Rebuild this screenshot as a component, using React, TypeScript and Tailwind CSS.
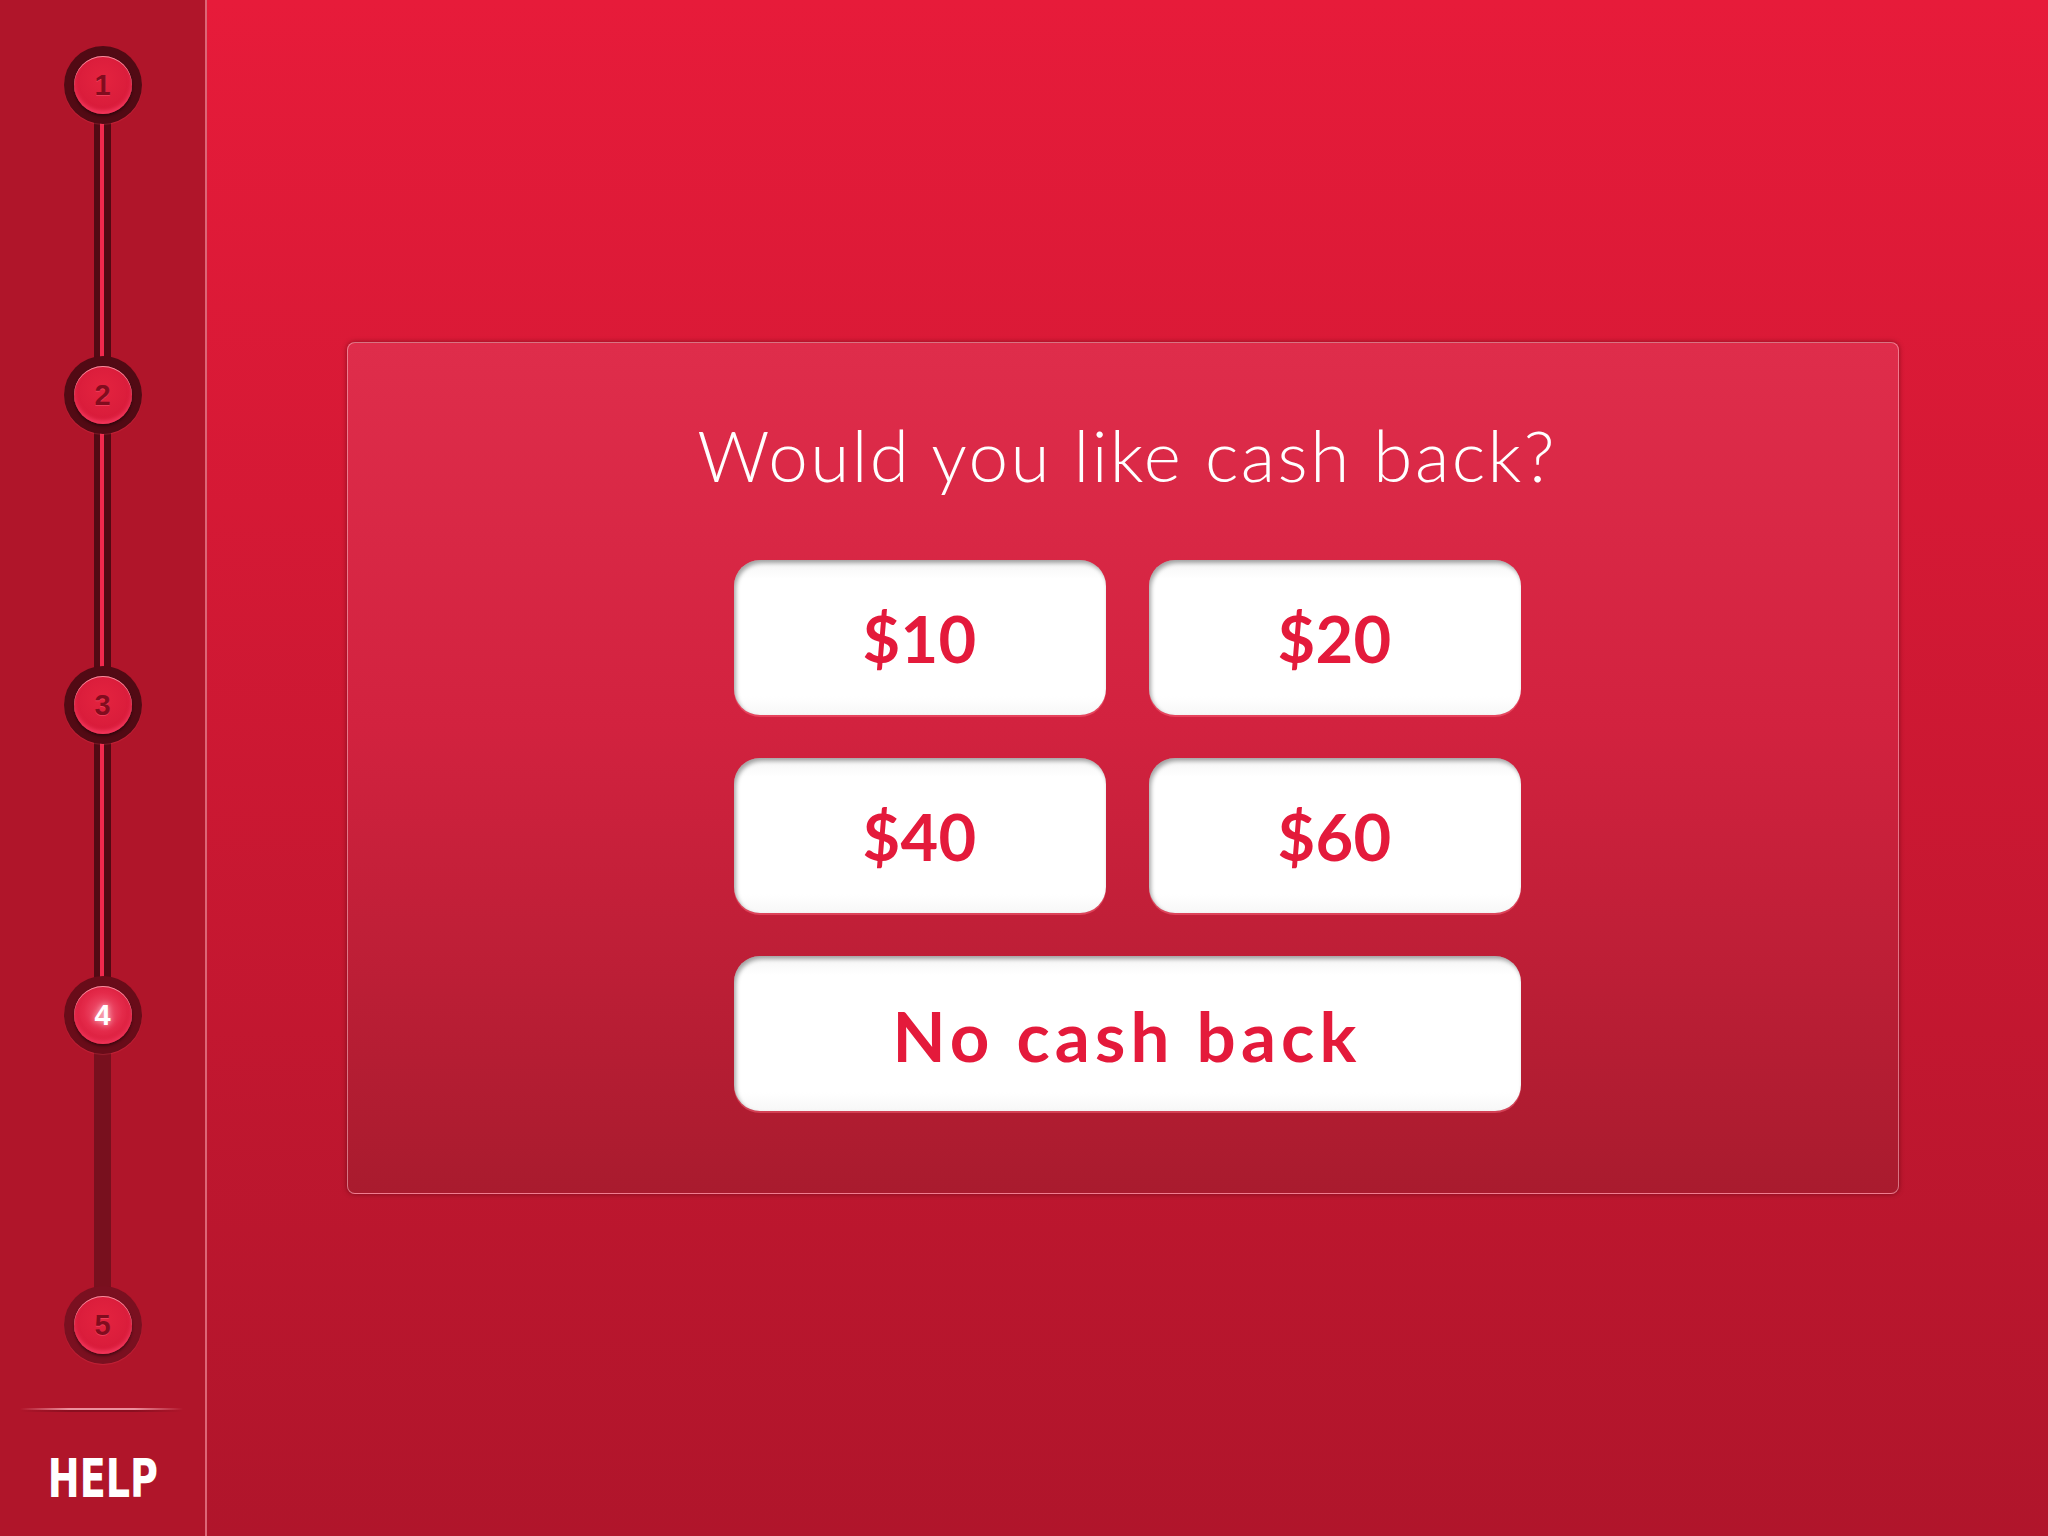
import React from 'react';

type StepProps = {
    num: number;
    state: 'done' | 'current' | 'todo';
};

const Step = ({ num, state }: StepProps) => {
    const ringClass = state === 'done'
        ? "bg-[#520a14]"
        : state === 'current' ? "bg-[#690c19]" : "bg-[#7a1020]";
    const numClass = state === 'current'
        ? "text-white [text-shadow:0_0_6px_rgba(255,255,255,0.7)]"
        : "text-[#820c1e] [text-shadow:0_1px_0_rgba(255,90,120,0.5)]";
    const innerBg = state === 'current'
        ? "bg-[radial-gradient(circle_at_50%_45%,#f25a76_0%,#e42a4a_45%,#d81b3b_75%,#f5325a_100%)]"
        : "bg-[radial-gradient(circle_at_50%_40%,#e4233f_0%,#d91c3b_65%,#f22e55_100%)]";

    return <div className={`relative z-10 w-[78px] h-[78px] rounded-full ${ringClass} flex items-center justify-center shadow-[0_1px_1px_rgba(255,80,100,0.25)]`}>
        <div className={`w-[58px] h-[58px] rounded-full ${innerBg} flex items-center justify-center shadow-[inset_0_1px_0_rgba(255,190,200,0.7),inset_0_-3px_4px_rgba(255,70,110,0.6),0_2px_3px_rgba(0,0,0,0.45)]`}>
            <span className={`font-['Liberation_Sans',sans-serif] font-bold text-[29px] leading-none ${numClass}`}>{num}</span>
        </div>
    </div>
};

const Line = ({ done }: { done: boolean }) => {
    if (!done) {
        return <div className="w-[17px] h-[240px] -my-[4px] bg-[#78101e]" />
    }
    return <div className="w-[17px] h-[240px] -my-[4px] bg-[#520a14] flex justify-center">
        <div className="w-[4px] h-full bg-[#f0294d] -ml-[2px] rounded-full" />
    </div>
};

const Sidebar = () => {
    const steps: Array<'done' | 'current' | 'todo'> = ['done', 'done', 'done', 'current', 'todo'];

    return <div className="w-[207px] h-full shrink-0 bg-[#b0152a] border-r-2 border-[#dc6676] flex flex-col items-center pt-[46px]">
        {steps.map((s, i) => (
            <React.Fragment key={i}>
                <Step num={i + 1} state={s} />
                {i < steps.length - 1 && <Line done={i < 3} />}
            </React.Fragment>
        ))}
        <div className="self-start ml-[20px] mt-[44px] w-[163px] flex flex-col">
            <div className="h-[2px] bg-[linear-gradient(to_right,transparent,#ec8f9c_30%,#ec8f9c_70%,transparent)]" />
            <div className="h-[2px] bg-[linear-gradient(to_right,transparent,#8a0f20_30%,#8a0f20_70%,transparent)]" />
        </div>
        <div className="mt-[40px] font-['DejaVu_Sans_Condensed','DejaVu_Sans',sans-serif] font-bold text-[53px] leading-none text-white scale-x-[0.8]">HELP</div>
    </div>
};

const AmountButton = ({ label, wide }: { label: string; wide?: boolean }) => {
    const textClass = wide
        ? "text-[69px] tracking-[0.075em] pt-[4px]"
        : "text-[65px] tracking-[0.005em] pt-[2px]";

    return <button
        className={`${wide ? "col-span-2" : ""} h-[155px] rounded-[26px] bg-[linear-gradient(to_bottom,#f4f4f4,#ffffff_12%,#ffffff_88%,#f7f7f7)] shadow-[inset_2px_3px_4px_rgba(0,0,0,0.35),0_2px_0_rgba(255,110,130,0.45)] flex items-center justify-center`}
    >
        <span className={`font-['Lato',sans-serif] font-bold leading-none text-[#e41a3b] ${textClass}`}>{label}</span>
    </button>
};

export default function App() {
    return <div className="w-[2048px] h-[1536px] flex overflow-hidden">
        <Sidebar />
        <main className="flex-1 h-full bg-[linear-gradient(to_bottom,#e71b3a,#b0152b)] flex items-center justify-center pr-[9px]">
            <div className="w-[1552px] h-[852px] rounded-[8px] border border-[rgba(255,190,200,0.55)] bg-[linear-gradient(to_bottom,#df2d4b,#d2223f_45%,#a91b2e)] shadow-[0_0_5px_rgba(70,0,10,0.55)] flex flex-col items-center pt-[76px] pl-[8px]">
                <h1 className="font-['Lato',sans-serif] font-light text-[71px] leading-none text-white tracking-[0.034em]">Would you like cash back?</h1>
                <div className="mt-[70px] w-[787px] grid grid-cols-2 gap-[43px]">
                    <AmountButton label="$10" />
                    <AmountButton label="$20" />
                    <AmountButton label="$40" />
                    <AmountButton label="$60" />
                    <AmountButton label="No cash back" wide />
                </div>
            </div>
        </main>
    </div>
}
